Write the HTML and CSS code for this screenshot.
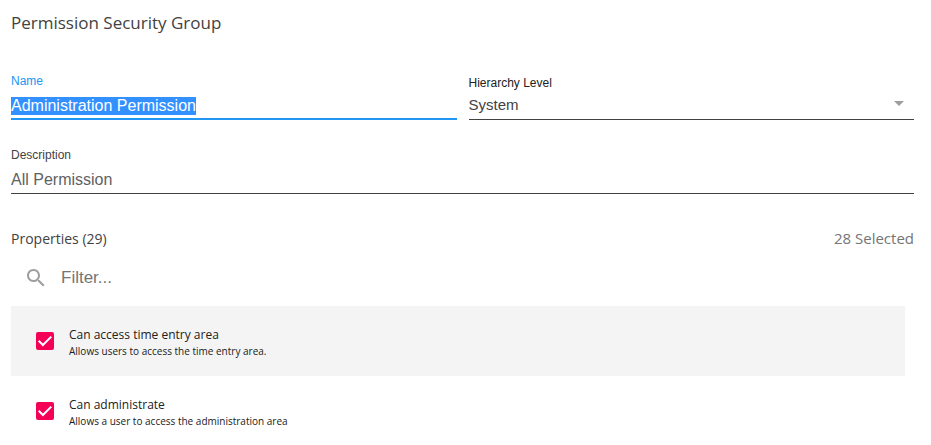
FILE: index.html
```html
<!DOCTYPE html>
<html lang="en">

<head>
  <meta charset="UTF-8" />
  <meta name="viewport" content="width=device-width, initial-scale=1.0" />
  <title>Permission Security Group</title>
  <link rel="stylesheet" href="styles.css">
</head>

<body>

  <form class="group-form">
    <h1>Permission Security Group</h1>

    <div class="row">
      <div class="field active">
        <label for="name">Name</label>
        <input type="text" id="name" value="Administration Permission" spellcheck="false" />
      </div>
      <div class="field">
        <label for="level">Hierarchy Level</label>
        <div class="select-wrap">
          <select id="level">
            <option>System</option>
          </select>
          <svg class="arrow" viewBox="0 0 10 5"><path d="M0 0h10L5 5z" /></svg>
        </div>
      </div>
    </div>

    <div class="field description">
      <label for="description">Description</label>
      <input type="text" id="description" value="All Permission" spellcheck="false" />
    </div>

    <div class="list-header">
      <h2>Properties (29)</h2>
      <span class="selected">28 Selected</span>
    </div>

    <div class="filter">
      <svg class="search-icon" viewBox="0 0 24 24"><path d="M15.5 14h-.79l-.28-.27C15.41 12.59 16 11.11 16 9.5 16 5.91 13.09 3 9.5 3S3 5.91 3 9.5 5.91 16 9.5 16c1.61 0 3.09-.59 4.23-1.57l.27.28v.79l5 4.99L20.49 19l-4.99-5zm-6 0C7.01 14 5 11.99 5 9.5S7.01 5 9.5 5 14 7.01 14 9.5 11.99 14 9.5 14z" /></svg>
      <input type="text" placeholder="Filter..." aria-label="Filter" />
    </div>

    <ul class="properties">
      <li>
        <span class="checkbox">
          <input type="checkbox" id="time-entry" checked />
          <svg viewBox="0 0 18 18"><path d="M2.7 8.8l4.2 4.2 8.4-8.4" /></svg>
        </span>
        <label for="time-entry">
          <span class="title">Can access time entry area</span>
          <span class="hint">Allows users to access the time entry area.</span>
        </label>
      </li>
      <li>
        <span class="checkbox">
          <input type="checkbox" id="administrate" checked />
          <svg viewBox="0 0 18 18"><path d="M2.7 8.8l4.2 4.2 8.4-8.4" /></svg>
        </span>
        <label for="administrate">
          <span class="title">Can administrate</span>
          <span class="hint">Allows a user to access the administration area</span>
        </label>
      </li>
    </ul>
  </form>

  <script>
    const nameInput = document.getElementById('name');
    nameInput.focus();
    nameInput.select();
  </script>

</body>

</html>
```

FILE: styles.css
```css
* {
  margin: 0;
  padding: 0;
  box-sizing: border-box;
}

body {
  font-family: 'Open Sans', sans-serif;
  background: #fff;
  color: #424242;
}

.group-form {
  padding: 11px 17px 0 11px;
}

h1 {
  font-size: 17px;
  font-weight: 400;
  line-height: 24px;
}

/* Text fields */
.row {
  display: grid;
  grid-template-columns: 1fr 1fr;
  align-items: end;
  gap: 12px;
  margin-top: 38px;
}

.field {
  display: flex;
  flex-direction: column;
  font-family: 'Liberation Sans', sans-serif;
}

.field label {
  font-size: 12px;
  line-height: 16px;
  color: #212121;
}

.field input,
.field select {
  width: 100%;
  height: 31px;
  padding-top: 4px;
  border: none;
  border-bottom: 1px solid #424242;
  outline: none;
  background: transparent;
  font-family: inherit;
  font-size: 16px;
  color: #616161;
}

.field select {
  height: 29px;
  padding: 0 0 2px;
  appearance: none;
  font-size: 15px;
  color: #424242;
}

.field.active label {
  color: #2196f3;
}

.field.active input {
  border-bottom: 2px solid #2196f3;
}

.field input::selection {
  background: #3390ff;
  color: #fff;
}

.select-wrap {
  position: relative;
}

.arrow {
  position: absolute;
  top: 10px;
  right: 10px;
  width: 10px;
  height: 5px;
  fill: #9e9e9e;
  pointer-events: none;
}

.description {
  margin-top: 27px;
}

.description label {
  color: #424242;
}

/* Properties */
.list-header {
  display: flex;
  justify-content: space-between;
  align-items: baseline;
  margin-top: 32px;
  line-height: 24px;
}

.list-header h2 {
  font-size: 14px;
  font-weight: 400;
}

.selected {
  font-size: 15px;
  color: #757575;
}

.filter {
  display: flex;
  align-items: center;
  gap: 13px;
  padding: 15px 13px 16px;
}

.search-icon {
  width: 24px;
  height: 24px;
  fill: #9e9e9e;
}

.filter input {
  flex: 1;
  height: 24px;
  border: none;
  outline: none;
  font-family: 'Liberation Sans', sans-serif;
  font-size: 17px;
}

.filter input::placeholder {
  color: #757575;
}

.properties {
  list-style: none;
  margin-right: 9px;
}

.properties li {
  display: flex;
  align-items: center;
  gap: 15px;
  height: 70px;
  padding: 0 25px;
}

.properties li:nth-child(odd) {
  background: #f4f4f4;
}

.properties label {
  display: flex;
  flex-direction: column;
  padding-top: 4px;
  color: #212121;
}

.title {
  font-size: 12px;
  line-height: 16px;
}

.hint {
  font-size: 10px;
  line-height: 16px;
}

.checkbox {
  display: grid;
  width: 18px;
  height: 18px;
}

.checkbox input,
.checkbox svg {
  grid-area: 1 / 1;
  width: 18px;
  height: 18px;
}

.checkbox input {
  appearance: none;
  border: 2px solid #757575;
  border-radius: 2px;
}

.checkbox input:checked {
  border-color: #f50057;
  background: #f50057;
}

.checkbox svg {
  fill: none;
  stroke: #fff;
  stroke-width: 2;
  pointer-events: none;
}
```
